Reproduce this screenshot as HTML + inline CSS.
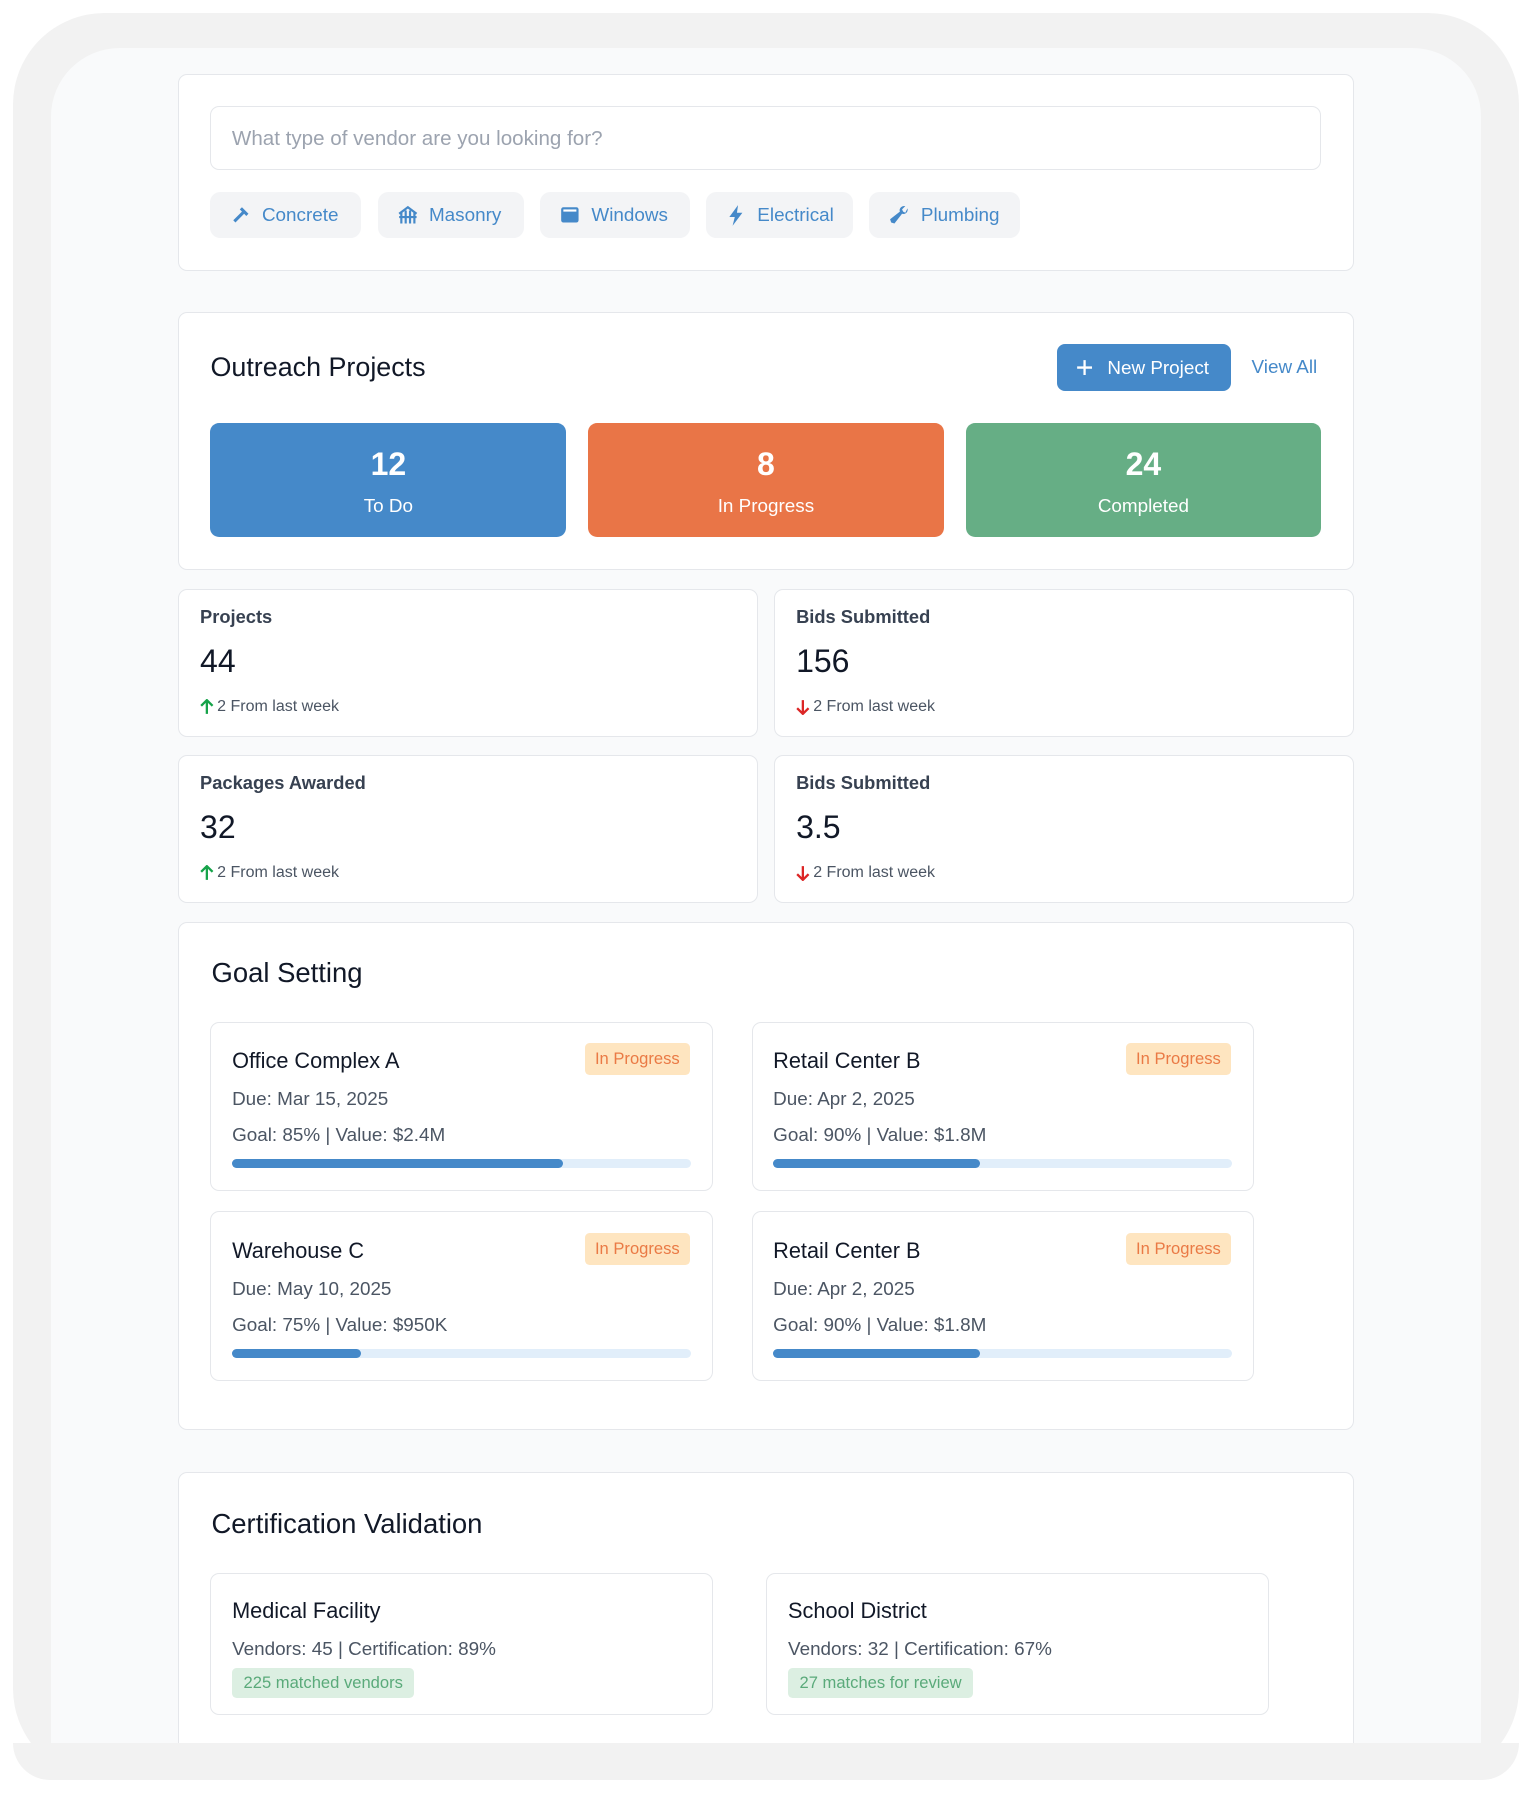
<!DOCTYPE html>
<html><head><meta charset="utf-8"><style>
*{box-sizing:border-box;margin:0;padding:0}
html,body{width:1533px;height:1797px;overflow:hidden;background:#fff}
#root{zoom:1.144;position:relative;width:1340px;height:1571px;font-family:"Liberation Sans",sans-serif;color:#111827}
.abs{position:absolute}
.frame{left:11px;top:11px;width:1317px;height:1545px;background:#f2f2f2;border-radius:80px}
.panel{left:45px;top:42px;width:1250px;height:1482px;background:#f9fafb;border-radius:60px 60px 0 0;overflow:hidden}
.card{position:absolute;background:#fff;border:1px solid #e5e7eb;border-radius:8px}
.chip{position:absolute;top:168px;height:40px;background:#f3f4f6;border-radius:9px;color:#4589c9;font-size:16.5px;display:flex;align-items:center;padding-left:17px;gap:9px}
.chip svg{width:19px;height:19px}
.tile{position:absolute;top:370px;width:311px;height:99px;border-radius:8px;color:#fff;text-align:center}
.tile b{display:block;font-size:28px;margin-top:20px}
.tile span{display:block;font-size:16.5px;margin-top:10px}
.mlabel{font-size:16px;font-weight:bold;color:#374151;position:absolute;left:18px;top:14px}
.mval{font-size:28px;position:absolute;left:18px;top:46px}
.mchg{font-size:14px;color:#4b5563;position:absolute;left:18px;top:94px;display:flex;align-items:center;gap:3px}
.h2{position:absolute;left:28px;font-size:24px;color:#111827}
.gc{position:absolute;width:439px;height:148px;background:#fff;border:1px solid #e5e7eb;border-radius:8px}
.gc .t{position:absolute;left:18px;top:22px;font-size:19px}
.gc .d{position:absolute;left:18px;top:57px;font-size:16.5px;color:#4b5563}
.gc .g{position:absolute;left:18px;top:89px;font-size:16.5px;color:#4b5563}
.badge{position:absolute;right:19px;top:18px;width:92px;height:28px;background:#fee5c0;color:#ea7a45;border-radius:4px;font-size:14.5px;text-align:center;line-height:28px}
.bar{position:absolute;left:18px;right:18px;top:119px;height:8px;background:#e1eefa;border-radius:4px}
.bar i{display:block;height:8px;background:#4589c9;border-radius:4px}
.cc{position:absolute;top:1375px;width:439px;height:124px;background:#fff;border:1px solid #e5e7eb;border-radius:8px}
.cc .t{position:absolute;left:18px;top:21px;font-size:19px}
.cc .d{position:absolute;left:18px;top:56px;font-size:16.5px;color:#4b5563}
.gb{position:absolute;left:18px;top:82px;height:26px;padding:0 10px;background:#dcefe2;color:#5aaa7a;border-radius:4px;font-size:14.5px;line-height:26px}
</style></head><body><div id="root">
<div class="abs frame"></div>
<div class="abs panel"></div>

<div class="card" style="left:156px;top:65px;width:1028px;height:172px">
  <div class="abs" style="left:27px;top:27px;width:971px;height:56px;border:1px solid #e5e7eb;border-radius:8px;font-size:18px;color:#9ca3af;padding:17px 0 0 18px">What type of vendor are you looking for?</div>
</div>
<div class="chip" style="left:184px;width:132px"><svg viewBox="0 0 20 20"><path d="M11 3l6 6-2 2-2-2-8 8-2-2 8-8-2-2z" fill="#4589c9"/></svg>Concrete</div>
<div class="chip" style="left:330px;width:128px"><svg viewBox="0 0 20 20" fill="none" stroke="#4589c9" stroke-width="2"><path d="M2 9L10 3l8 6M4 8v10M16 8v10M8 6v12M12 6v12M2 12h16"/></svg>Masonry</div>
<div class="chip" style="left:472px;width:131px"><svg viewBox="0 0 20 20"><rect x="2" y="3" width="16" height="14" rx="2" fill="#4589c9"/><rect x="4" y="5" width="12" height="2" fill="#fff"/></svg>Windows</div>
<div class="chip" style="left:617px;width:129px"><svg viewBox="0 0 20 20"><path d="M12 1L4 12h5l-2 8 9-12h-5z" fill="#4589c9"/></svg>Electrical</div>
<div class="chip" style="left:760px;width:132px"><svg viewBox="0 0 20 20"><path d="M17 4a4 4 0 01-5 5L5 18l-3-1-1-3 9-7a4 4 0 015-5l-3 3 1 2 2 1z" fill="#4589c9"/></svg>Plumbing</div>

<div class="card" style="left:156px;top:273px;width:1028px;height:225px"></div>
<div class="abs" style="left:184px;top:308px;font-size:23.5px">Outreach Projects</div>
<div class="abs" style="left:924px;top:301px;width:152px;height:41px;background:#4589c9;border-radius:7px;color:#fff;font-size:16.5px;display:flex;align-items:center;padding-left:17px;gap:12px"><svg width="15" height="15" viewBox="0 0 15 15"><path d="M7.5 1v13M1 7.5h13" stroke="#fff" stroke-width="2"/></svg>New Project</div>
<div class="abs" style="left:1094px;top:311px;font-size:16.5px;color:#4589c9">View All</div>
<div class="tile" style="left:184px;background:#4589c9"><b>12</b><span>To Do</span></div>
<div class="tile" style="left:514px;background:#e97547"><b>8</b><span>In Progress</span></div>
<div class="tile" style="left:844px;background:#66ae85"><b>24</b><span>Completed</span></div>

<div class="card" style="left:156px;top:515px;width:507px;height:129px"><div class="mlabel">Projects</div><div class="mval">44</div><div class="mchg"><svg width="12" height="14" viewBox="0 0 12 14"><path d="M6 13V2M1 6l5-5 5 5" stroke="#16a34a" stroke-width="2" fill="none"/></svg>2 From last week</div></div>
<div class="card" style="left:677px;top:515px;width:507px;height:129px"><div class="mlabel">Bids Submitted</div><div class="mval">156</div><div class="mchg"><svg width="12" height="14" viewBox="0 0 12 14"><path d="M6 1v11M1 8l5 5 5-5" stroke="#dc2626" stroke-width="2" fill="none"/></svg>2 From last week</div></div>
<div class="card" style="left:156px;top:660px;width:507px;height:129px"><div class="mlabel">Packages Awarded</div><div class="mval">32</div><div class="mchg"><svg width="12" height="14" viewBox="0 0 12 14"><path d="M6 13V2M1 6l5-5 5 5" stroke="#16a34a" stroke-width="2" fill="none"/></svg>2 From last week</div></div>
<div class="card" style="left:677px;top:660px;width:507px;height:129px"><div class="mlabel">Bids Submitted</div><div class="mval">3.5</div><div class="mchg"><svg width="12" height="14" viewBox="0 0 12 14"><path d="M6 1v11M1 8l5 5 5-5" stroke="#dc2626" stroke-width="2" fill="none"/></svg>2 From last week</div></div>

<div class="card" style="left:156px;top:806px;width:1028px;height:444px"><div class="h2" style="top:30px">Goal Setting</div></div>
<div class="gc" style="left:184px;top:893px"><div class="t">Office Complex A</div><div class="badge">In Progress</div><div class="d">Due: Mar 15, 2025</div><div class="g">Goal: 85% | Value: $2.4M</div><div class="bar"><i style="width:72%"></i></div></div>
<div class="gc" style="left:657px;top:893px"><div class="t">Retail Center B</div><div class="badge">In Progress</div><div class="d">Due: Apr 2, 2025</div><div class="g">Goal: 90% | Value: $1.8M</div><div class="bar"><i style="width:45%"></i></div></div>
<div class="gc" style="left:184px;top:1059px"><div class="t">Warehouse C</div><div class="badge">In Progress</div><div class="d">Due: May 10, 2025</div><div class="g">Goal: 75% | Value: $950K</div><div class="bar"><i style="width:28%"></i></div></div>
<div class="gc" style="left:657px;top:1059px"><div class="t">Retail Center B</div><div class="badge">In Progress</div><div class="d">Due: Apr 2, 2025</div><div class="g">Goal: 90% | Value: $1.8M</div><div class="bar"><i style="width:45%"></i></div></div>

<div class="card" style="left:156px;top:1287px;width:1028px;height:300px;border-radius:8px 8px 0 0"><div class="h2" style="top:30px">Certification Validation</div></div>
<div class="cc" style="left:184px"><div class="t">Medical Facility</div><div class="d">Vendors: 45 | Certification: 89%</div><div class="gb">225 matched vendors</div></div>
<div class="cc" style="left:670px"><div class="t">School District</div><div class="d">Vendors: 32 | Certification: 67%</div><div class="gb">27 matches for review</div></div>

<div class="abs" style="left:11px;top:1524px;width:1317px;height:32px;background:#f2f2f2;border-radius:0 0 80px 80px"></div>
<div class="abs" style="left:0;top:1556px;width:1340px;height:15px;background:#fff"></div>
</div></body></html>
